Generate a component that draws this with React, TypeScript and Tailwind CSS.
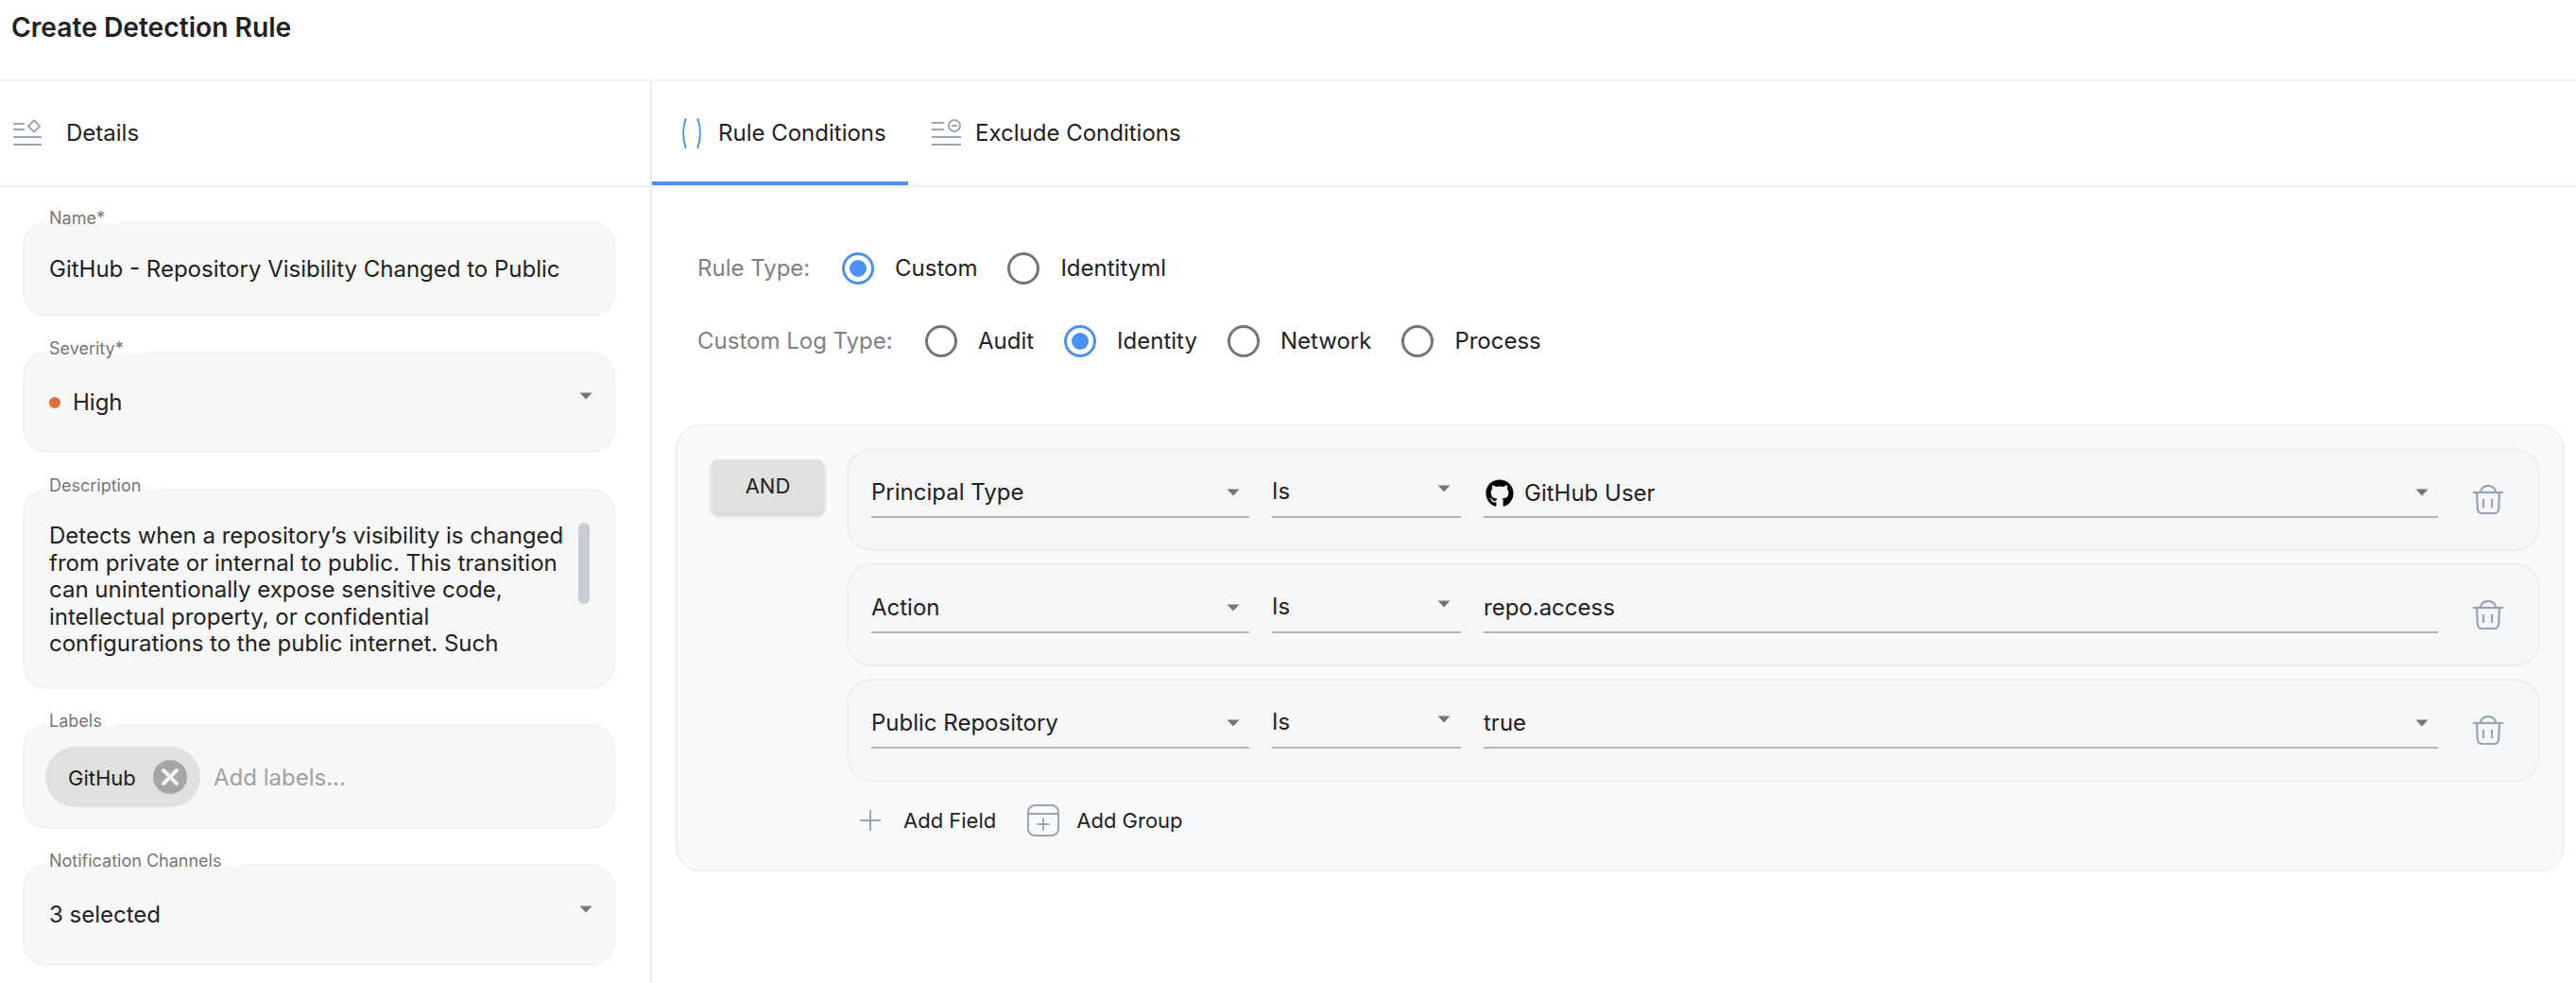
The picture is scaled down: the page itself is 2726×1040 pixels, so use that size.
import { FaGithub } from "react-icons/fa";

const ICON = "#9aa6b6";

function Caret({ className }: { className?: string }) {
  return (
    <svg width="14" height="8" viewBox="0 0 14 8" className={className}>
      <path d="M0.5 0.5h13L7 7.5z" fill="#757575" />
    </svg>
  );
}

function DetailsIcon() {
  return (
    <svg width="32" height="30" viewBox="0 0 32 30" fill="none" stroke={ICON} strokeWidth="2">
      <path d="M1 5h12M1 11h12M1 19h30M1 27h30" />
      <path d="M23 1.5 29 7.5 23 13.5 17 7.500z" strokeLinejoin="round" />
    </svg>
  );
}

function ExcludeIcon() {
  return (
    <svg width="32" height="30" viewBox="0 0 32 30" fill="none" stroke={ICON} strokeWidth="2">
      <path d="M1 4h13M1 11h13M1 19h31M1 27h31" />
      <circle cx="25" cy="7" r="6" />
      <path d="M22 7h6" />
    </svg>
  );
}

function ParenIcon() {
  return (
    <svg width="20" height="32" viewBox="0 0 20 32" fill="none" stroke="#4a90f5" strokeWidth="2" strokeLinecap="round">
      <path d="M3.5 1C0.5 10 0.5 22 3.5 31" />
      <path d="M16.5 1C19.5 10 19.5 22 16.5 31" />
    </svg>
  );
}

function PlusIcon() {
  return (
    <svg width="24" height="24" viewBox="0 0 24 24" fill="none" stroke={ICON} strokeWidth="2">
      <path d="M12 1v22M1 12h22" />
    </svg>
  );
}

function GroupIcon() {
  return (
    <svg width="34" height="34" viewBox="0 0 34 34" fill="none" stroke={ICON} strokeWidth="2">
      <rect x="1" y="1" width="32" height="32" rx="7" />
      <path d="M1 10h32M17 14.5v13M10.5 21h13" />
    </svg>
  );
}

function TrashIcon() {
  return (
    <svg width="32" height="32" viewBox="0 0 32 32" fill="none" stroke="#98a3b3" strokeWidth="2.2">
      <path d="M0 8h32" />
      <path d="M8 8V7.5a8 6.500 0 0 1 16 0V8" />
      <path d="M4 8l.8 17c.2 3.200 2 5 5 5h12.400c3 0 4.800-1.800 5-5L28 8" />
      <path d="M11 15v9M20 15v9" />
    </svg>
  );
}

function Box({ label, notch, className, children }: { label: string; notch: string; className: string; children: React.ReactNode }) {
  return (
    <div className={`relative rounded-[26px] border-2 border-[#f2f2f2] bg-[#f7f7f7] ${className}`}>
      <span className={`absolute -top-[2px] left-[22px] h-[2px] bg-white ${notch}`} />
      <span className="absolute -top-[18px] left-[26px] text-[18px] leading-[26px] text-[#757575]">{label}</span>
      {children}
    </div>
  );
}

function Radio({ label, checked }: { label: string; checked?: boolean }) {
  return (
    <div className="flex items-center">
      <span
        className={`flex h-[34px] w-[34px] items-center justify-center rounded-full border-[3px] ${
          checked ? "border-[#4a90f5]" : "border-[#757575]"
        }`}
      >
        {checked && <span className="h-[18px] w-[18px] rounded-full bg-[#4a90f5]" />}
      </span>
      <span className="ml-[22px] text-[24px] leading-[38px] text-[#212121]">{label}</span>
    </div>
  );
}

function Field({ className, children, arrow }: { className: string; children: React.ReactNode; arrow?: "low" | "high" }) {
  return (
    <div className={`relative flex h-[54px] items-center border-b-2 border-[#b5b5b5] text-[24px] text-[#212121] ${className}`}>
      {children}
      {arrow === "low" && <Caret className="absolute right-[10px] top-[23px]" />}
      {arrow === "high" && <Caret className="absolute right-[11px] top-[19px]" />}
    </div>
  );
}

function ConditionRow({ name, value, select }: { name: string; value: React.ReactNode; select?: boolean }) {
  return (
    <div className="flex h-[109px] items-start gap-[24px] rounded-[26px] border-2 border-[#eceef0] bg-[#f5f6f8] pl-[24px] pr-[37px] pt-[18px]">
      <Field className="w-[400px] pt-[2px]" arrow="low">
        {name}
      </Field>
      <Field className="w-[200px]" arrow="high">
        Is
      </Field>
      <Field className="flex-1 pt-[2px]" arrow={select ? "low" : undefined}>
        {value}
      </Field>
      <div className="ml-[13px] mt-[19px] h-[32px] w-[32px]">
        <TrashIcon />
      </div>
    </div>
  );
}

export default function App() {
  return (
    <div className="h-[1040px] w-[2726px] overflow-hidden bg-white font-['Inter',sans-serif] text-[#212121]">
      <div className="h-[86px] border-b-2 border-[#f2f2f2] pl-[12px] pt-[11px]">
        <h1 className="text-[28.2px] font-semibold leading-[36px] text-[#212121]">Create Detection Rule</h1>
      </div>

      <div className="flex h-[954px]">
        <aside className="w-[690px] shrink-0 border-r-2 border-[#ebebeb]">
          <div className="flex h-[112px] items-center border-b-2 border-[#f2f2f2] pl-[13px]">
            <DetailsIcon />
            <span className="ml-[25px] text-[24px] leading-[36px]">Details</span>
          </div>

          <div className="flex flex-col gap-[37px] pl-[24px] pr-[37px] pt-[36px]">
            <Box label="Name*" notch="w-[78px]" className="h-[101px] pl-[26px] pt-[35px]">
              <p className="text-[24px] leading-[28.6px]">GitHub - Repository Visibility Changed to Public</p>
            </Box>

            <Box label="Severity*" notch="w-[106px]" className="h-[107px] pl-[26px] pt-[38px]">
              <div className="flex items-center">
                <span className="h-[12px] w-[12px] rounded-full bg-[#e0713a]" />
                <span className="ml-[13px] text-[24px] leading-[28.6px]">High</span>
              </div>
              <Caret className="absolute right-[22px] top-[41px]" />
            </Box>

            <Box label="Description" notch="w-[122px]" className="mt-[1px] h-[212px] pl-[26px] pt-[34px]">
              <p className="w-[556px] text-[24px] leading-[28.6px]">
                Detects when a repository’s visibility is changed from private or internal to public. This transition can
                unintentionally expose sensitive code, intellectual property, or confidential configurations to the public
                internet. Such
              </p>
              <span className="absolute right-[25px] top-[34px] h-[86px] w-[12px] rounded-full bg-[#c8ccd6]" />
            </Box>

            <Box label="Labels" notch="w-[76px]" className="h-[111px] pl-[22px] pt-[22px]">
              <div className="flex items-center">
                <div className="flex h-[64px] w-[164px] items-center rounded-full bg-[#e0e0e0] pl-[24px]">
                  <span className="pt-[1px] text-[22px] leading-[28px]">GitHub</span>
                  <span className="ml-[18px] flex h-[36px] w-[36px] items-center justify-center rounded-full bg-[#a6a6a6]">
                    <svg width="20" height="20" viewBox="0 0 20 20" stroke="#f2f2f2" strokeWidth="4" strokeLinecap="round">
                      <path d="M3 3l14 14M17 3 3 17" />
                    </svg>
                  </span>
                </div>
                <span className="ml-[14px] pt-[1px] text-[24px] leading-[28px] text-[#a0a0a0]">Add labels...</span>
              </div>
            </Box>

            <Box label="Notification Channels" notch="w-[206px]" className="h-[108px] pl-[26px] pt-[38px]">
              <p className="text-[24px] leading-[28.6px]">3 selected</p>
              <Caret className="absolute right-[22px] top-[42px]" />
            </Box>
          </div>
        </aside>

        <main className="min-w-0 flex-1">
          <div className="flex h-[112px] border-b-2 border-[#f2f2f2] text-[24px]">
            <div className="relative flex w-[271px] items-center pl-[32px]">
              <ParenIcon />
              <span className="ml-[18px] leading-[36px]">Rule Conditions</span>
              <span className="absolute bottom-0 left-0 h-[4px] w-[271px] bg-[#4a90f5]" />
            </div>
            <div className="ml-[24px] flex items-center">
              <ExcludeIcon />
              <span className="ml-[15px] leading-[36px]">Exclude Conditions</span>
            </div>
          </div>

          <div className="flex flex-col gap-[39px] pl-[48px] pt-[67px]">
            <div className="flex h-[38px] items-center">
              <span className="w-[153px] text-[24px] text-[#808080]">Rule Type:</span>
              <div className="flex gap-[32px]">
                <Radio label="Custom" checked />
                <Radio label="Identityml" />
              </div>
            </div>
            <div className="flex h-[38px] items-center">
              <span className="w-[241px] text-[24px] text-[#808080]">Custom Log Type:</span>
              <div className="flex gap-[32px]">
                <Radio label="Audit" />
                <Radio label="Identity" checked />
                <Radio label="Network" />
                <Radio label="Process" />
              </div>
            </div>
          </div>

          <div className="ml-[25px] mr-[12px] mt-[69px] flex h-[473px] gap-[24px] rounded-[26px] border-2 border-[#eff0f2] bg-[#f9fafc] pl-[36px] pr-[24px] pt-[23px]">
            <button className="mt-[12px] h-[57px] w-[119px] shrink-0 rounded-[7px] bg-[#e0e0e0] text-[22px] text-[#212121] shadow-[0_3px_5px_rgba(0,0,0,0.18)]">
              AND
            </button>
            <div className="min-w-0 flex-1">
              <div className="flex flex-col gap-[13px]">
                <ConditionRow
                  name="Principal Type"
                  select
                  value={
                    <span className="flex items-center pt-[2px]">
                      <FaGithub className="ml-[2px] h-[30px] w-[30px] text-black" />
                      <span className="ml-[11px]">GitHub User</span>
                    </span>
                  }
                />
                <ConditionRow name="Action" value="repo.access" />
                <ConditionRow name="Public Repository" select value="true" />
              </div>
              <div className="mt-[24px] flex items-center text-[22px]">
                <div className="ml-[13px]">
                  <PlusIcon />
                </div>
                <span className="ml-[23px]">Add Field</span>
                <div className="ml-[33px]">
                  <GroupIcon />
                </div>
                <span className="ml-[18px]">Add Group</span>
              </div>
            </div>
          </div>
        </main>
      </div>
    </div>
  );
}
